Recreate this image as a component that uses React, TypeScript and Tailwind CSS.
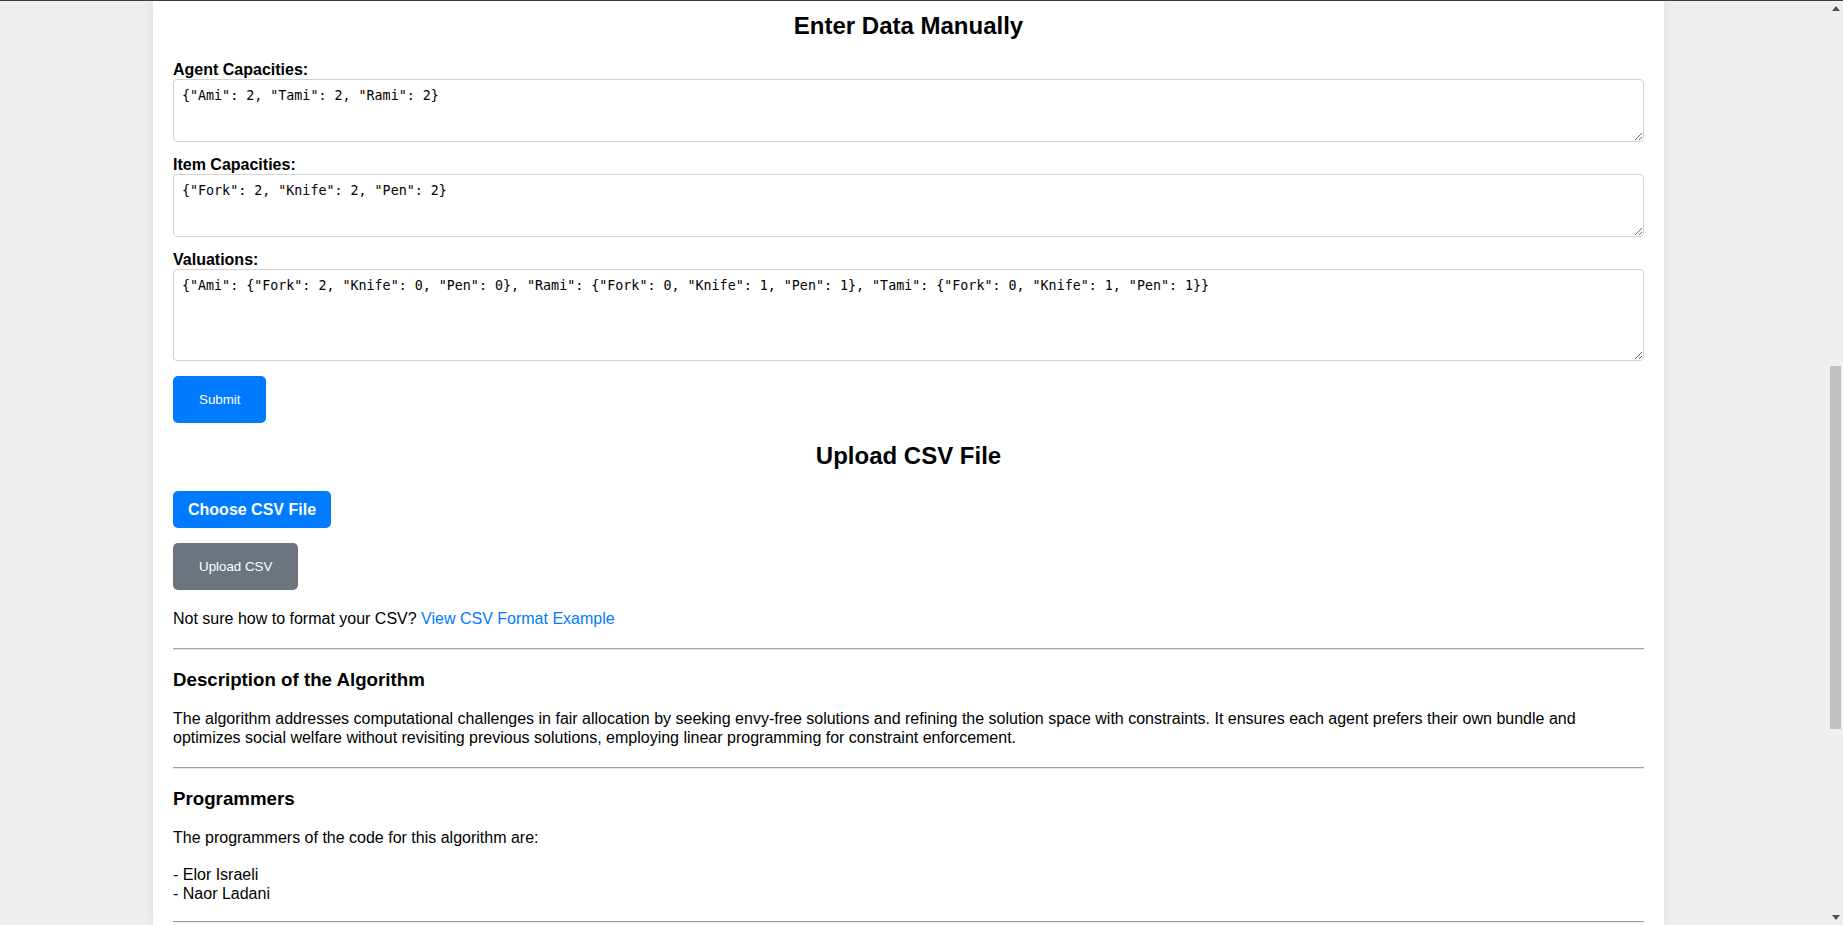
import React from "react";

const mono = { fontFamily: '"DejaVu Sans Mono", "Liberation Mono", monospace' };

function Label({ children, className = "" }: { children: React.ReactNode; className?: string }) {
  return <label className={`block text-[16px] font-bold leading-[18px] text-black ${className}`}>{children}</label>;
}

function Area({ value, h, className = "" }: { value: string; h: string; className?: string }) {
  return (
    <textarea
      readOnly
      defaultValue={value}
      style={mono}
      className={`block w-full ${h} rounded-[4px] border border-[#d3d3d3] bg-white px-[8px] py-[8px] text-[13.33px] leading-[15.5px] text-black outline-none ${className}`}
    />
  );
}

function Rule({ className = "" }: { className?: string }) {
  return <div className={`h-0 w-full border-t border-b border-t-[#a2a2a2] border-b-[#e6e6e6] ${className}`} />;
}

export default function App() {
  return (
    <div
      className="flex h-[925px] w-full flex-col overflow-hidden bg-[#efefef]"
      style={{ fontFamily: '"Liberation Sans", Arial, sans-serif' }}
    >
      <div className="h-[1px] w-full shrink-0 bg-[#3c3c3c]" />
      <div className="flex min-h-0 flex-1 flex-row">
        <div className="min-w-0 flex-1 overflow-hidden">
          <div className="ml-[153px] h-full w-[1511px] bg-white px-[20px] pt-[11px] shadow-[0_0_10px_rgba(0,0,0,0.1)]">
            <h2 className="text-center text-[24px] font-bold leading-[28px] text-black">Enter Data Manually</h2>

            <Label className="mt-[21px]">Agent Capacities:</Label>
            <Area h="h-[63px]" value={'{"Ami": 2, "Tami": 2, "Rami": 2}'} />

            <Label className="mt-[14px]">Item Capacities:</Label>
            <Area h="h-[63px]" value={'{"Fork": 2, "Knife": 2, "Pen": 2}'} />

            <Label className="mt-[14px]">Valuations:</Label>
            <Area
              h="h-[92px]"
              value={
                '{"Ami": {"Fork": 2, "Knife": 0, "Pen": 0}, "Rami": {"Fork": 0, "Knife": 1, "Pen": 1}, "Tami": {"Fork": 0, "Knife": 1, "Pen": 1}}'
              }
            />

            <div className="mt-[15px] flex">
              <button className="rounded-[5px] bg-[#007bff] px-[26px] py-[15px] text-[13.33px] leading-[17px] text-white">
                Submit
              </button>
            </div>

            <h2 className="mt-[19px] text-center text-[24px] font-bold leading-[28px] text-black">Upload CSV File</h2>

            <div className="mt-[21px] flex">
              <span className="rounded-[5px] bg-[#007bff] px-[15px] py-[10px] text-[16px] font-bold leading-[17px] text-white">
                Choose CSV File
              </span>
            </div>

            <div className="mt-[15px] flex">
              <button className="rounded-[5px] bg-[#6c757d] px-[26px] py-[15px] text-[13.33px] leading-[17px] text-white">
                Upload CSV
              </button>
            </div>

            <p className="mt-[20px] text-[16px] leading-[18px] text-black">
              Not sure how to format your CSV? <span className="text-[#007bff]">View CSV Format Example</span>
            </p>

            <Rule className="mt-[20px]" />

            <h3 className="mt-[19px] text-[18.72px] font-bold leading-[22px] text-black">Description of the Algorithm</h3>
            <p className="mt-[19px] text-[16px] leading-[18.5px] text-black">
              The algorithm addresses computational challenges in fair allocation by seeking envy-free solutions and refining
              the solution space with constraints. It ensures each agent prefers their own bundle and optimizes social welfare
              without revisiting previous solutions, employing linear programming for constraint enforcement.
            </p>

            <Rule className="mt-[20px]" />

            <h3 className="mt-[19px] text-[18.72px] font-bold leading-[22px] text-black">Programmers</h3>
            <p className="mt-[19px] whitespace-pre-line text-[16px] leading-[18.5px] text-black">
              {"The programmers of the code for this algorithm are:\n\n- Elor Israeli\n- Naor Ladani"}
            </p>

            <Rule className="mt-[18px]" />
          </div>
        </div>

        <div className="flex w-[15px] shrink-0 flex-col bg-[#efefef]">
          <div className="flex h-[15px] items-center justify-center">
            <svg width="8" height="5" viewBox="0 0 8 5">
              <polygon points="4,0 8,5 0,5" fill="#505050" />
            </svg>
          </div>
          <div className="h-[350px]" />
          <div className="mx-auto h-[363px] w-[11px] bg-[#c1c1c1]" />
          <div className="flex-1" />
          <div className="flex h-[15px] items-center justify-center">
            <svg width="8" height="5" viewBox="0 0 8 5">
              <polygon points="0,0 8,0 4,5" fill="#505050" />
            </svg>
          </div>
        </div>
      </div>
    </div>
  );
}
